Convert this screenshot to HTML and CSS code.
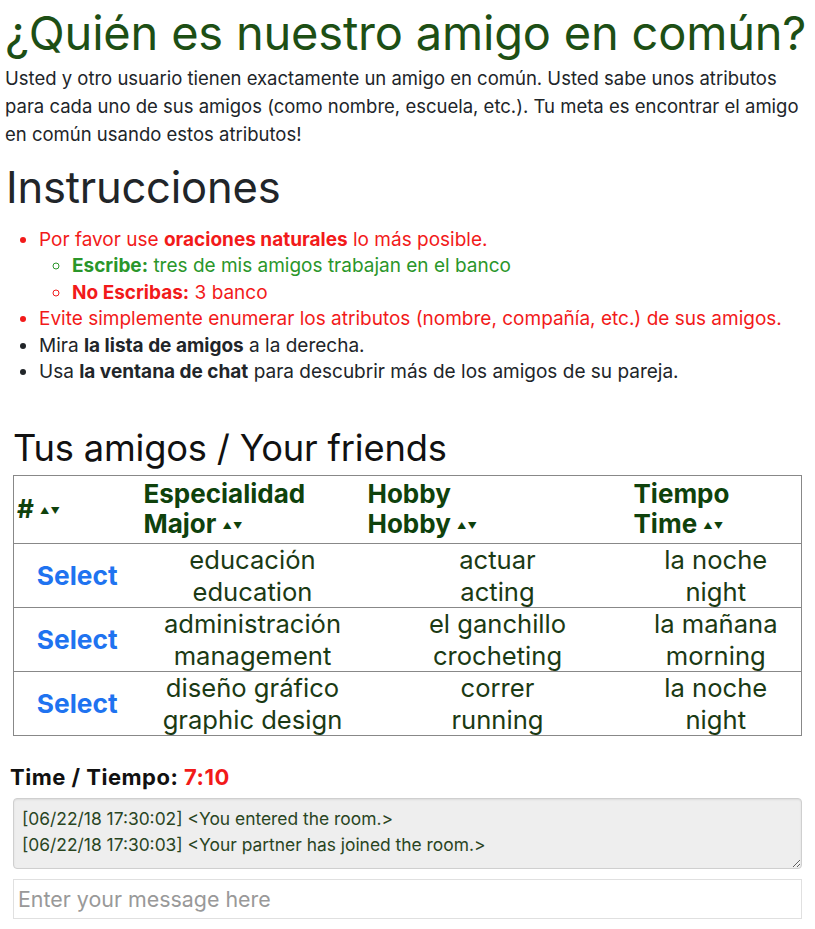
FILE: index.html
```html
<!DOCTYPE html>
<html lang="es">
<head>
<meta charset="utf-8">
<title>¿Quién es nuestro amigo en común?</title>
<link rel="stylesheet" href="styles.css">
</head>
<body>
<h1 class="title">¿Quién es nuestro amigo en común?</h1>
<p class="intro">Usted y otro usuario tienen exactamente un amigo en común. Usted sabe unos atributos para cada uno de sus amigos (como nombre, escuela, etc.). Tu meta es encontrar el amigo en común usando estos atributos!</p>
<h2 class="subtitle">Instrucciones</h2>
<ul class="rules">
  <li class="red">Por favor use <b>oraciones naturales</b> lo más posible.
    <ul class="sub">
      <li class="green"><b>Escribe:</b> tres de mis amigos trabajan en el banco</li>
      <li class="red"><b>No Escribas:</b> 3 banco</li>
    </ul>
  </li>
  <li class="red">Evite simplemente enumerar los atributos (nombre, compañía, etc.) de sus amigos.</li>
  <li>Mira <b>la lista de amigos</b> a la derecha.</li>
  <li>Usa <b>la ventana de chat</b> para descubrir más de los amigos de su pareja.</li>
</ul>
<section class="friends">
  <h2 class="friends-title">Tus amigos / Your friends</h2>
  <table class="grid">
    <thead>
      <tr>
        <th class="c1"># <span class="sort">▲▼</span></th>
        <th class="c2">Especialidad<br>Major <span class="sort">▲▼</span></th>
        <th class="c3">Hobby<br>Hobby <span class="sort">▲▼</span></th>
        <th class="c4">Tiempo<br>Time <span class="sort">▲▼</span></th>
      </tr>
    </thead>
    <tbody>
      <tr>
        <td class="sel"><a href="#">Select</a></td>
        <td>educación<br>education</td>
        <td>actuar<br>acting</td>
        <td>la noche<br>night</td>
      </tr>
      <tr>
        <td class="sel"><a href="#">Select</a></td>
        <td>administración<br>management</td>
        <td>el ganchillo<br>crocheting</td>
        <td>la mañana<br>morning</td>
      </tr>
      <tr>
        <td class="sel"><a href="#">Select</a></td>
        <td>diseño gráfico<br>graphic design</td>
        <td>correr<br>running</td>
        <td>la noche<br>night</td>
      </tr>
    </tbody>
  </table>
</section>
<section class="chat">
  <div class="timer">Time / Tiempo: <span class="clock">7:10</span></div>
  <textarea class="log" readonly>[06/22/18 17:30:02] &lt;You entered the room.&gt;
[06/22/18 17:30:03] &lt;Your partner has joined the room.&gt;</textarea>
  <input class="msg" type="text" placeholder="Enter your message here">
</section>
</body>
</html>
```
FILE: styles.css
```css
* { box-sizing: border-box; }
body {
  margin: 0;
  padding: 0 5px;
  font-family: Inter, "Liberation Sans", Arial, sans-serif;
  color: #212529;
  background: #fff;
}
.title {
  margin: 4px 0 0;
  font-size: 47px;
  line-height: 58px;
  font-weight: 400;
  letter-spacing: -0.2px;
  color: #1d4f15;
}
.intro {
  margin: 2px 0 0;
  font-size: 18.5px;
  line-height: 28px;
}
.subtitle {
  margin: 13px 0 0 1px;
  font-size: 43.5px;
  line-height: 52px;
  font-weight: 400;
  letter-spacing: -0.2px;
}
.rules {
  margin: 14px 0 0;
  padding-left: 34px;
  font-size: 19px;
  line-height: 26.4px;
}
.rules .sub {
  padding-left: 33px;
  list-style-type: circle;
  margin: 0;
}
.red { color: #f21a1a; }
.green { color: #2a962a; }
.friends { margin-top: 41px; padding-left: 8px; padding-right: 8px; }
.friends-title {
  margin: 0 0 5px;
  font-size: 36.3px;
  line-height: 44px;
  font-weight: 400;
  letter-spacing: -0.2px;
  color: #111;
}
.grid {
  width: 100%;
  border-collapse: collapse;
  border: 1px solid #888;
}
.grid th {
  text-align: left;
  font-size: 26px;
  line-height: 30px;
  color: #0f420c;
  padding: 3px 3px 2px;
  vertical-align: middle;
  font-weight: 700;
}
.grid .sort { font-size: 9px; vertical-align: middle; letter-spacing: 1px; }
.grid .c1 { width: 127px; }
.grid .c2 { width: 224px; }
.grid .c3 { width: 266px; }
.grid td {
  text-align: center;
  font-size: 25.6px;
  line-height: 31.5px;
  color: #1b3a14;
  padding: 0 3px;
  border-top: 1px solid #888;
}
.grid .sel a {
  color: #1f73f0;
  font-weight: 700;
  font-size: 26.3px;
  text-decoration: none;
}
.chat { margin-top: 28px; padding: 0 8px 0 8px; }
.timer {
  font-size: 22px;
  font-weight: 700;
  letter-spacing: 0.5px;
  color: #111;
  line-height: 26px;
  margin-left: -3px;
}
.clock { color: #f21a1a; }
.log {
  display: block;
  width: 100%;
  height: 71px;
  margin-top: 8px;
  padding: 7px 8px;
  background: #eeeeee;
  border: 1px solid #cfcfcf;
  border-radius: 4px;
  box-shadow: inset 0 1px 2px rgba(0,0,0,0.08);
  font-family: Inter, "Liberation Sans", Arial, sans-serif;
  font-size: 17.4px;
  line-height: 26px;
  color: #29451f;
  resize: vertical;
}
.msg {
  display: block;
  width: 100%;
  height: 40px;
  margin-top: 10px;
  padding: 4px;
  border: 1px solid #e0e0e0;
  font-family: Inter, "Liberation Sans", Arial, sans-serif;
  font-size: 21.4px;
}
.msg::placeholder { color: #999; }
```
